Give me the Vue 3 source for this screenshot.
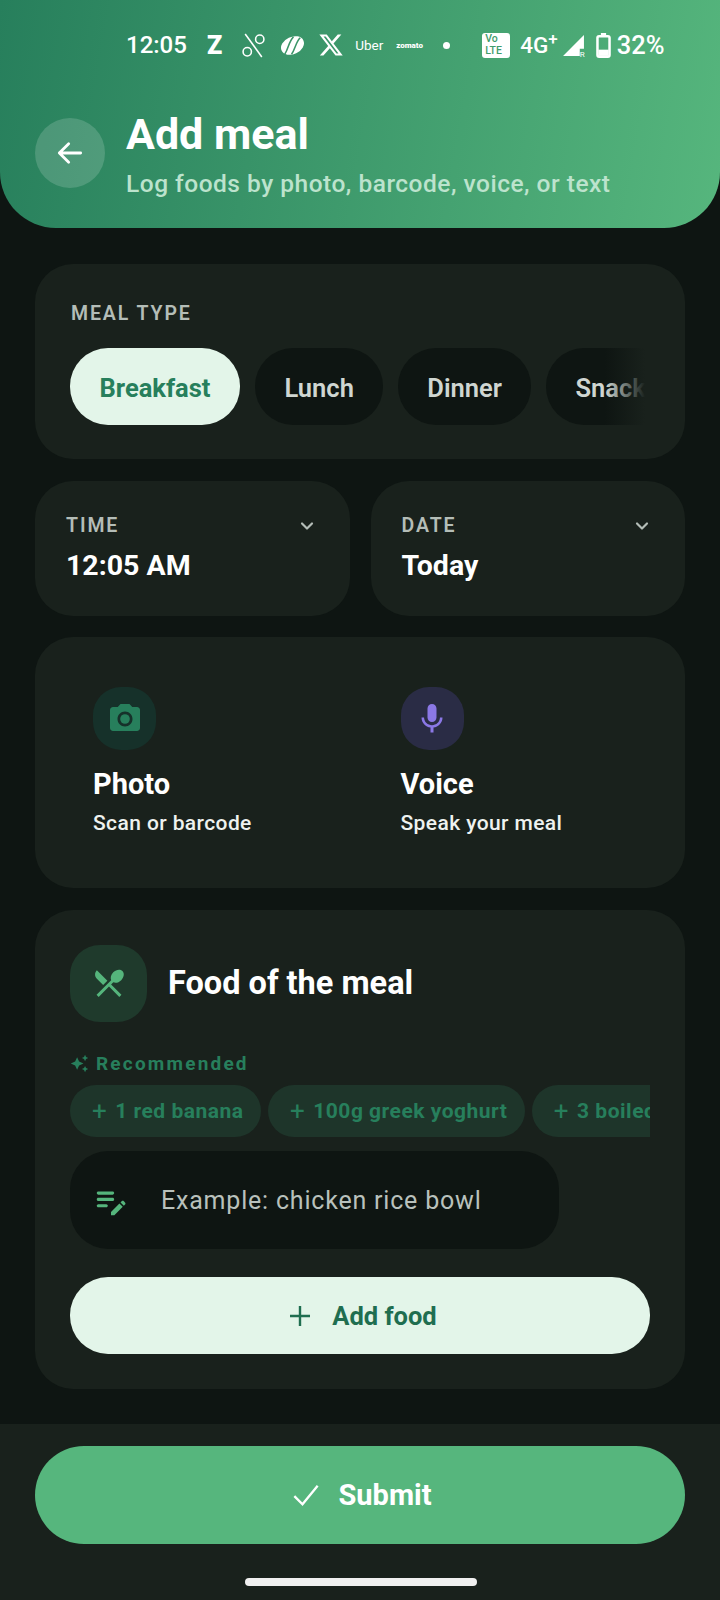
<template>
  <div class="page">
    <header class="header">
      <div class="status">
        <span class="clock">12:05</span>
        <span class="app-z">Z</span>
        <svg class="st-ico" viewBox="0 0 24 24" fill="none" stroke="#fff" stroke-width="1.5">
          <path d="M4 1l16 22" />
          <circle cx="18" cy="6" r="4" />
          <circle cx="6" cy="18" r="4" />
        </svg>
        <svg class="st-ico blob" viewBox="0 0 26 24">
          <ellipse cx="13" cy="12" rx="12.5" ry="9" fill="#fff" transform="rotate(-25 13 12)" />
          <path d="M5 21C9 15 9 8 14 3M12 21c4-5 4-12 9-17" fill="none" stroke="#3b9568" stroke-width="1.6" />
        </svg>
        <svg class="st-ico x-ico" viewBox="0 0 24 24" fill="#fff">
          <path d="M18.244 2.25h3.308l-7.227 8.26 8.502 11.24H16.17l-5.214-6.817L4.99 21.75H1.68l7.73-8.835L1.254 2.25H8.08l4.713 6.231zm-1.161 17.52h1.833L7.084 4.126H5.117z" />
        </svg>
        <span class="uber">Uber</span>
        <span class="zomato">zomato</span>
        <span class="dot"></span>
        <span class="volte">Vo<br />LTE</span>
        <span class="net">4G<sup>+</sup></span>
        <span class="signal">
          <svg viewBox="0 0 22 22" fill="#fff"><path d="M21 1v13h-4v7H1z" /></svg>
          <i>R</i>
        </span>
        <svg class="battery" viewBox="0 0 14 24" fill="none">
          <path d="M4.5 0h5v2h-5z" fill="#fff" />
          <rect x="1.2" y="3" width="11.6" height="19.8" rx="1.6" stroke="#fff" stroke-width="2.4" />
          <rect x="2" y="16" width="10" height="6" fill="#fff" />
        </svg>
        <span class="pct">32%</span>
      </div>
      <div class="head-row">
        <button class="back">
          <svg viewBox="0 0 24 24" fill="none" stroke="#fff" stroke-width="2.1" stroke-linecap="round" stroke-linejoin="round">
            <path d="M20 12H4M11 5l-7 7 7 7" />
          </svg>
        </button>
        <div>
          <h1>Add meal</h1>
          <p>Log foods by photo, barcode, voice, or text</p>
        </div>
      </div>
    </header>

    <main class="content">
      <section class="card meal-card">
        <div class="label">MEAL TYPE</div>
        <div class="chips">
          <button
            v-for="m in mealTypes"
            :key="m"
            class="chip"
            :class="{ active: m === 'Breakfast' }"
          >{{ m }}</button>
          <span class="fade"></span>
        </div>
      </section>

      <div class="pair">
        <section v-for="p in pickers" :key="p.label" class="card picker">
          <div class="picker-top">
            <span class="label">{{ p.label }}</span>
            <svg class="chev" viewBox="0 0 24 24" fill="none" stroke="#b4bdb7" stroke-width="2.6" stroke-linecap="round" stroke-linejoin="round">
              <path d="M6 9l6 6 6-6" />
            </svg>
          </div>
          <div class="picker-val">{{ p.value }}</div>
        </section>
      </div>

      <section class="card capture">
        <div class="cap">
          <div class="cap-ico green">
            <svg viewBox="0 0 24 24" fill="#277f5c">
              <circle cx="12" cy="12" r="3.2" />
              <path d="M9 2L7.17 4H4c-1.1 0-2 .9-2 2v12c0 1.1.9 2 2 2h16c1.1 0 2-.9 2-2V6c0-1.1-.9-2-2-2h-3.17L15 2H9zm3 15c-2.76 0-5-2.24-5-5s2.24-5 5-5 5 2.24 5 5-2.24 5-5 5z" />
            </svg>
          </div>
          <h3>Photo</h3>
          <p>Scan or barcode</p>
        </div>
        <div class="cap">
          <div class="cap-ico purple">
            <svg viewBox="0 0 24 24" fill="#8b78e6">
              <path d="M12 14c1.66 0 2.99-1.34 2.99-3L15 5c0-1.66-1.34-3-3-3S9 3.34 9 5v6c0 1.66 1.34 3 3 3zm5.3-3c0 3-2.54 5.1-5.3 5.1S6.7 14 6.7 11H5c0 3.41 2.72 6.23 6 6.72V21h2v-3.28c3.28-.48 6-3.3 6-6.72h-1.7z" />
            </svg>
          </div>
          <h3>Voice</h3>
          <p>Speak your meal</p>
        </div>
      </section>

      <section class="card food">
        <div class="food-head">
          <div class="food-ico">
            <svg viewBox="0 0 24 24" fill="#55b57c">
              <path d="M8.1 13.34l2.83-2.83L3.91 3.5c-1.56 1.56-1.56 4.09 0 5.66l4.19 4.18zm6.78-1.81c1.53.71 3.68.21 5.27-1.38 1.91-1.91 2.28-4.65.81-6.12-1.46-1.46-4.2-1.1-6.12.81-1.59 1.59-2.09 3.74-1.38 5.27L3.7 19.87l1.41 1.41L12 14.41l6.88 6.88 1.41-1.41L13.41 13l1.47-1.47z" />
            </svg>
          </div>
          <h2>Food of the meal</h2>
        </div>
        <div class="rec">
          <svg viewBox="0 0 24 24" fill="#277f5c">
            <path d="M19 9l1.25-2.75L23 5l-2.75-1.25L19 1l-1.25 2.75L15 5l2.75 1.25L19 9zm-7.5.5L9 4 6.5 9.5 1 12l5.5 2.5L9 20l2.5-5.5L17 12l-5.5-2.5zM19 15l-1.25 2.75L15 19l2.75 1.25L19 23l1.25-2.75L23 19l-2.75-1.25L19 15z" />
          </svg>
          <span>Recommended</span>
        </div>
        <div class="sugs">
          <span v-for="s in suggestions" :key="s" class="sug"><b>+</b>{{ s }}</span>
        </div>
        <div class="input">
          <svg viewBox="0 0 24 24" fill="#55b57c">
            <path d="M14,11c0,0.55-0.45,1-1,1H4c-0.55,0-1-0.45-1-1s0.45-1,1-1h9C13.55,10,14,10.45,14,11z M3,7c0,0.55,0.45,1,1,1h9c0.55,0,1-0.45,1-1s-0.45-1-1-1H4C3.45,6,3,6.45,3,7z M10,15c0-0.55-0.45-1-1-1H4c-0.55,0-1,0.45-1,1s0.45,1,1,1h5C9.55,16,10,15.55,10,15z M18.01,12.87l0.71-0.71c0.39-0.39,1.02-0.39,1.41,0l0.71,0.71c0.39,0.39,0.39,1.02,0,1.41l-0.71,0.71L18.01,12.87z M17.3,13.58l-5.3,5.3V21h2.12l5.3-5.3L17.3,13.58z" />
          </svg>
          <span>Example: chicken rice bowl</span>
        </div>
        <button class="add">
          <svg viewBox="0 0 24 24" fill="none" stroke="#1f6e50" stroke-width="2.4">
            <path d="M12 2v20M2 12h20" />
          </svg>
          Add food
        </button>
      </section>
    </main>

    <footer class="bar">
      <button class="submit">
        <svg viewBox="0 0 24 24" fill="none" stroke="#fff" stroke-width="2">
          <path d="M2 13l7 7L22 4" />
        </svg>
        Submit
      </button>
      <div class="home"></div>
    </footer>
  </div>
</template>

<script setup>
const mealTypes = ['Breakfast', 'Lunch', 'Dinner', 'Snack']
const pickers = [
  { label: 'TIME', value: '12:05 AM' },
  { label: 'DATE', value: 'Today' }
]
const suggestions = ['1 red banana', '100g greek yoghurt', '3 boiled eggs']
</script>

<style>
html, body { background: #0e1512; }
</style>

<style scoped>
.page {
  width: 720px;
  height: 1600px;
  display: flex;
  flex-direction: column;
  overflow: hidden;
  background: #0e1512;
  font-family: Roboto, "Liberation Sans", sans-serif;
  color: #fff;
}
button {
  border: 0;
  font-family: inherit;
}
h1, h2, h3, p { margin: 0; }

/* header */
.header {
  height: 228px;
  box-sizing: border-box;
  padding: 28px 0 0 35px;
  border-radius: 0 0 56px 56px;
  background: linear-gradient(100deg, #277f5c 0%, #56b67d 100%);
  flex-shrink: 0;
}
.status {
  display: flex;
  align-items: center;
  height: 34px;
  padding-left: 91px;
}
.clock { font-size: 24px; font-weight: 500; margin-right: 20px; }
.app-z { font-size: 25px; font-weight: 900; margin-right: 19px; }
.st-ico { width: 25px; height: 25px; margin-right: 14px; }
.blob { margin-right: 13px; }
.x-ico { width: 26px; height: 26px; margin-right: 11px; }
.uber { font-size: 13.5px; width: 28px; margin-right: 13px; }
.zomato { font-size: 8px; font-weight: 900; width: 26px; margin-right: 21px; }
.dot { width: 7px; height: 7px; border-radius: 50%; background: #fff; margin-right: 32px; }
.volte {
  width: 28px;
  height: 25px;
  padding-left: 3px;
  box-sizing: border-box;
  background: #fff;
  border-radius: 3px;
  color: #3f9c6c;
  font-size: 10.5px;
  line-height: 12px;
  font-weight: 500;
  margin-right: 10px;
}
.net { font-size: 22.5px; font-weight: 500; display: flex; align-items: flex-start; margin-right: 4px; }
.net sup { font-size: 17px; line-height: 17px; margin-top: -1px; }
.signal { position: relative; width: 23px; height: 23px; margin-right: 11px; }
.signal svg { width: 23px; height: 23px; display: block; }
.signal i {
  position: absolute;
  right: 0;
  bottom: -2px;
  font-size: 8px;
  font-style: normal;
}
.battery { width: 15px; height: 25px; margin-right: 6px; }
.pct { font-size: 25.5px; font-weight: 500; }

.head-row {
  display: flex;
  align-items: flex-start;
  gap: 21px;
  margin-top: 46px;
}
.back {
  width: 70px;
  height: 70px;
  margin-top: 10px;
  padding: 0;
  border-radius: 50%;
  background: rgba(255, 255, 255, 0.16);
  display: flex;
  align-items: center;
  justify-content: center;
  flex-shrink: 0;
}
.back svg { width: 32px; height: 32px; }
h1 {
  font-size: 43px;
  font-weight: 700;
  line-height: 52px;
}
.head-row p {
  margin-top: 8px;
  font-size: 24.5px;
  font-weight: 500;
  line-height: 32px;
  letter-spacing: 0.5px;
  color: #bce3cd;
}

/* body */
.content {
  flex: 1;
  padding: 36px 35px 0;
  display: flex;
  flex-direction: column;
  gap: 21.5px;
}
.card {
  background: #19211c;
  border-radius: 38px;
}
.label {
  font-size: 19.5px;
  font-weight: 600;
  letter-spacing: 1.9px;
  line-height: 24px;
  color: #b4bdb7;
}
.meal-card {
  height: 195px;
  box-sizing: border-box;
  padding: 38px 35px 0 36px;
}
.chips {
  position: relative;
  display: flex;
  gap: 15.5px;
  margin: 22px 0 0 -1px;
  overflow: hidden;
  width: 575px;
}
.chip {
  height: 77px;
  padding: 3px 29px 0;
  border-radius: 38px;
  background: #0e1512;
  color: #cfd6d1;
  font-size: 25.5px;
  font-weight: 600;
  white-space: nowrap;
  flex-shrink: 0;
}
.chip.active {
  padding: 3px 29.5px 0;
  background: #e3f5e9;
  color: #277f5c;
  font-weight: 700;
}
.fade {
  position: absolute;
  right: 0;
  top: 0;
  bottom: 0;
  width: 40px;
  background: linear-gradient(90deg, rgba(25, 33, 28, 0), #19211c);
}

.pair {
  display: flex;
  gap: 21px;
}
.picker {
  flex: 1;
  height: 135px;
  box-sizing: border-box;
  padding: 33px 31px 0;
}
.picker-top {
  display: flex;
  justify-content: space-between;
  align-items: center;
}
.chev { width: 20px; height: 20px; margin-right: 2px; }
.picker-val {
  margin-top: 9px;
  font-size: 28.5px;
  font-weight: 700;
  line-height: 38px;
}

.capture {
  height: 251px;
  box-sizing: border-box;
  padding: 50px 0 0 58px;
  display: flex;
}
.cap { width: 307.5px; flex-shrink: 0; }
.cap-ico {
  width: 63px;
  height: 63px;
  border-radius: 28px;
  display: flex;
  align-items: center;
  justify-content: center;
}
.cap-ico svg { width: 36px; height: 36px; }
.cap-ico.green { background: #16312a; }
.cap-ico.purple { background: #2a2c45; }
.cap h3 {
  margin-top: 14px;
  font-size: 29px;
  font-weight: 700;
  line-height: 40px;
}
.cap p {
  margin-top: 5px;
  font-size: 21px;
  font-weight: 500;
  line-height: 28px;
  letter-spacing: 0.4px;
  color: #eef2ef;
}

.food {
  height: 479px;
  box-sizing: border-box;
  padding: 35px 35px 0;
}
.food-head {
  display: flex;
  align-items: center;
  gap: 21px;
}
.food-ico {
  width: 77px;
  height: 77px;
  border-radius: 30px;
  background: #1f3a2c;
  display: flex;
  align-items: center;
  justify-content: center;
}
.food-ico svg { width: 36px; height: 36px; }
.food-head h2 {
  font-size: 32.5px;
  font-weight: 700;
}
.rec {
  display: flex;
  align-items: center;
  gap: 7px;
  margin-top: 30px;
  height: 24px;
  color: #277f5c;
  font-size: 19px;
  font-weight: 700;
  letter-spacing: 2.2px;
}
.rec svg { width: 19px; height: 19px; }
.sugs {
  display: flex;
  gap: 6.5px;
  margin-top: 9px;
  width: 580px;
  overflow: hidden;
}
.sug {
  height: 52px;
  padding: 0 18px 0 22px;
  border-radius: 26px;
  background: #1e352a;
  color: #277f5c;
  font-size: 21px;
  font-weight: 700;
  letter-spacing: 0.5px;
  display: flex;
  align-items: center;
  white-space: nowrap;
  flex-shrink: 0;
}
.sug b {
  font-weight: 400;
  font-size: 26px;
  margin-right: 8px;
}
.input {
  width: 489px;
  height: 98px;
  margin-top: 14px;
  border-radius: 38px;
  background: #0e1512;
  display: flex;
  align-items: center;
  padding: 2px 0 0 22px;
  box-sizing: border-box;
  color: #b9c1bc;
  font-size: 25px;
  letter-spacing: 0.8px;
}
.input svg { width: 38px; height: 38px; margin-right: 31px; }
.add {
  width: 580px;
  height: 77px;
  margin-top: 28px;
  padding: 2px 0 0 5px;
  border-radius: 38px;
  background: #e3f5e9;
  color: #1f6e50;
  font-size: 25.5px;
  font-weight: 700;
  display: flex;
  align-items: center;
  justify-content: center;
  gap: 20px;
}
.add svg { width: 24px; height: 24px; }

/* bottom bar */
.bar {
  height: 176px;
  flex-shrink: 0;
  box-sizing: border-box;
  padding: 22px 35px 0;
  background: #19211c;
  display: flex;
  flex-direction: column;
  align-items: center;
}
.submit {
  width: 650px;
  height: 98px;
  border-radius: 49px;
  padding-left: 10px;
  background: #56b67d;
  color: #fff;
  font-size: 29px;
  font-weight: 700;
  display: flex;
  align-items: center;
  justify-content: center;
  gap: 18px;
}
.submit svg { width: 28px; height: 28px; }
.home {
  width: 232px;
  height: 8px;
  margin: 34px 0 0 2px;
  border-radius: 4px;
  background: #f0f0f0;
}
</style>
